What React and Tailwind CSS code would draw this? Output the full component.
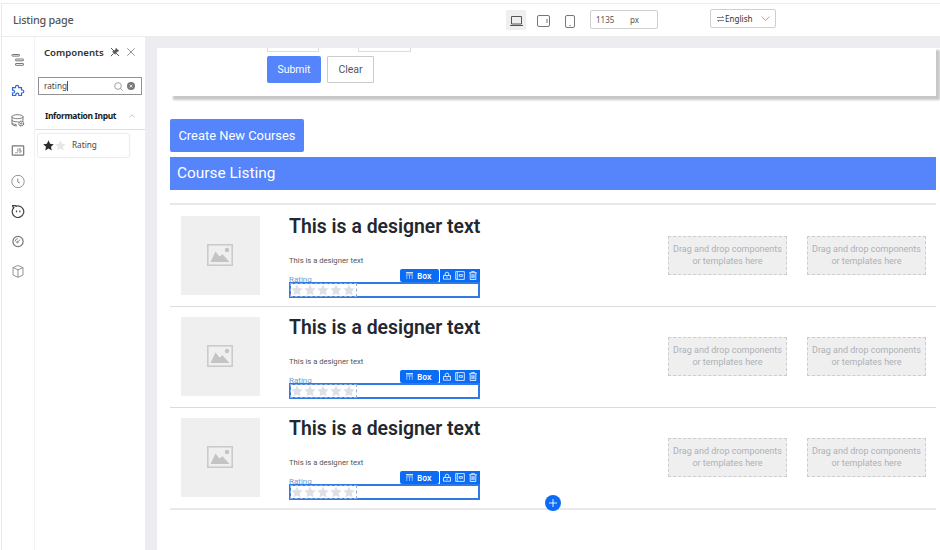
import React from "react";

const STAR = "M12 .8l3.400 7.400 8 1-5.900 5.500 1.500 8L12 18.800l-7 3.900 1.500-8L.6 9.200l8-1z";

function Star({ className }) {
  return (
    <svg viewBox="0 0 24 24" className={className} fill="currentColor">
      <path d={STAR} />
    </svg>
  );
}

function RailIcon({ children, className = "text-[#777]" }) {
  return (
    <div className="flex h-[30.2px] w-full shrink-0 items-center justify-center">
      <svg width="14" height="14" viewBox="0 0 14 14" fill="none" stroke="currentColor" strokeWidth="1" className={className}>
        {children}
      </svg>
    </div>
  );
}

function Rail() {
  return (
    <nav className="flex w-[33px] shrink-0 flex-col border-r border-[#f3f3f5] pt-[8px]">
      <RailIcon>
        <rect x="1" y="1.500" width="7.500" height="1.600" rx=".4" />
        <rect x="4.500" y="6" width="8" height="1.800" rx=".4" />
        <rect x="4.500" y="10.500" width="8" height="1.800" rx=".4" />
      </RailIcon>
      <RailIcon className="text-[#2b69d9]">
        <path strokeWidth="1.200" d="M1.500 4.700h3V3.900a1.600 1.600 0 1 1 3.200 0v.8h2.800v2.300h.8a1.500 1.500 0 1 1 0 3h-.8v2.500H7.800v-.8a1.500 1.500 0 1 0-3 0v.8H1.500V10h.7a1.400 1.400 0 1 0 0-2.800h-.7z" />
      </RailIcon>
      <RailIcon>
        <ellipse cx="6.500" cy="3.700" rx="5.500" ry="2" />
        <path d="M1 3.700V11c0 1 2.200 1.900 5 2M12 3.700v4M1 7c0 1.200 3.500 2.100 6.500 1.700M1 10c0 .8 2 1.500 4.500 1.500" />
        <circle cx="10.200" cy="10.500" r="2.400" strokeWidth="1.200" strokeDasharray="1.400 .4" />
        <circle cx="10.200" cy="10.500" r=".7" />
      </RailIcon>
      <RailIcon>
        <rect x="1.300" y="1.800" width="11.400" height="9.400" rx=".5" strokeWidth="1.200" />
        <path strokeWidth=".8" d="M6.800 4.500v3.300c0 .9-.8 1-2.600 1M10 4.800H8.300v1.500H10v1.800H8" />
      </RailIcon>
      <RailIcon className="text-[#888]">
        <circle cx="7" cy="7.500" r="6.200" strokeWidth=".9" />
        <path d="M6.800 4.500V8l2 1" />
      </RailIcon>
      <RailIcon className="text-[#444]">
        <path strokeWidth="1.200" d="M1 1.700h4.200M1.200 1.700l1.300 1.900M3.300 3.200A5.800 5.800 0 1 0 7 1.900c-.9 0-1.800.2-2.600.6" />
        <path strokeWidth="1.200" d="M5.500 6.500v1.700M8.800 6.500v1.700" />
      </RailIcon>
      <RailIcon>
        <circle cx="7" cy="7.500" r="5.100" strokeWidth="1.200" />
        <path strokeWidth=".8" d="M6.400 8.200l2.800-2.600M4.200 7.500A2.900 2.900 0 0 1 7 4.600" />
        <circle cx="6.400" cy="8.200" r=".8" strokeWidth=".8" />
      </RailIcon>
      <RailIcon className="text-[#888]">
        <path strokeWidth=".9" d="M7 1.500l5 2.100v7.400l-5 2.300-5-2.300V3.600zM2 3.600l5 2.200 5-2.200M7 5.800v7.500" />
      </RailIcon>
    </nav>
  );
}

function ComponentsPanel() {
  return (
    <aside className="flex w-[110px] shrink-0 flex-col">
      <div className="flex h-[33px] items-center pl-[9px]">
        <h2 className="w-[66px] whitespace-nowrap font-['Noto_Sans',sans-serif] text-[9.600px] font-semibold text-[#333]">Components</h2>
        <svg width="10" height="10" viewBox="0 0 10 10" className="-mt-[4px] text-[#555]" fill="none" stroke="currentColor">
          <path d="M1 1l8 8M.8 9.200l2.700-2.700" />
          <path d="M6 1l3 3-1.600.4-1.800 1.800-.4 1.400-3-3 1.500-.4 1.900-1.800z" fill="currentColor" strokeWidth=".3" />
        </svg>
        <svg width="8" height="8" viewBox="0 0 8 8" className="-mt-[4px] ml-[7px] text-[#777]" fill="none" stroke="currentColor" strokeWidth=".8">
          <path d="M.3.3l7.400 7.400M7.700.3L.3 7.700" />
        </svg>
      </div>
      <div className="ml-[3px] mt-[7px] flex h-[18px] w-[104px] items-center border border-[#929292] pl-[5px]">
        <span className="font-['Noto_Sans',sans-serif] text-[8.200px] text-[#444]">rating</span>
        <span className="h-[10px] w-px bg-[#555]" />
        <svg width="9" height="9" viewBox="0 0 9 9" className="ml-auto text-[#888]" fill="none" stroke="currentColor" strokeWidth=".8">
          <circle cx="4" cy="4" r="3.300" />
          <path d="M6.400 6.400l2.200 2.200" />
        </svg>
        <svg width="8" height="8" viewBox="0 0 8 8" className="ml-[4px] mr-[6px]">
          <circle cx="4" cy="4" r="4" fill="#777" />
          <path d="M2.500 2.500l3 3m0-3l-3 3" stroke="#fff" strokeWidth=".8" />
        </svg>
      </div>
      <div className="mt-[7px] flex h-[28px] items-center justify-between border-b border-[#dedee0] pl-[10px] pr-[10px]">
        <h3 className="whitespace-nowrap pt-[2px] font-['Noto_Sans',sans-serif] text-[8.500px] font-bold tracking-[-0.360px] text-[#1a1a1a]">Information Input</h3>
        <svg width="6" height="4" viewBox="0 0 6 4" fill="none" stroke="#aaa" strokeWidth=".7">
          <path d="M.4 3.400L3 .8l2.600 2.600" />
        </svg>
      </div>
      <div className="ml-[2px] mt-[3px] flex h-[25px] w-[93px] items-center rounded-[3px] border border-[#ececee] pl-[5px] shadow-[0_0_1px_#eee]">
        <Star className="size-[11px] text-[#2c2c2e]" />
        <Star className="ml-[1px] size-[11px] text-[#e6e6e9]" />
        <span className="ml-[6px] font-['Noto_Sans',sans-serif] text-[8.200px] text-[#444]">Rating</span>
      </div>
    </aside>
  );
}

function Header() {
  return (
    <header className="flex h-[34px] shrink-0 items-center border-b border-t border-[#ececee] pl-[11px] text-[#555]">
      <h1 className="w-[493px] font-['Noto_Sans',sans-serif] text-[10.800px] font-medium tracking-[-0.220px] text-[#555]">Listing page</h1>
      <div className="flex h-[20px] w-[20px] items-center justify-center bg-[#efeff0]">
        <svg width="13" height="12" viewBox="0 0 13 12" className="mt-[2px]" fill="none" stroke="#555">
          <path d="M1.500 1.500h10v7.500h-10z" />
          <path d="M0 10.500h13" />
        </svg>
      </div>
      <svg width="13" height="12" viewBox="0 0 13 12" className="ml-[11px] mt-[2px]" fill="none" stroke="#666" strokeWidth=".9">
        <rect x=".5" y=".5" width="12" height="11" rx="1.500" />
        <path d="M10 4v4" />
      </svg>
      <svg width="10" height="13" viewBox="0 0 10 13" className="ml-[15px] mt-[2px]" fill="none" stroke="#666" strokeWidth=".9">
        <rect x=".5" y=".5" width="9" height="12" rx="1.500" />
        <path d="M4.300 10.500h1.400" />
      </svg>
      <div className="-mt-[1px] ml-[15px] flex h-[19px] w-[68px] items-center rounded-[2px] border border-[#cfcfd1] pl-[5px] font-['Noto_Sans',sans-serif] text-[8px] text-[#555]">
        <span className="w-[34px]">1135</span>
        <span>px</span>
      </div>
      <div className="-mt-[3px] ml-[52px] flex h-[19px] w-[66px] items-center rounded-[2px] border border-[#cfcfd1] pl-[6px] font-['Noto_Sans',sans-serif] text-[8.100px] text-[#333]">
        <svg width="7" height="6" viewBox="0 0 7 6" fill="none" stroke="#666" strokeWidth=".8">
          <path d="M0 1.500h6.500L5 .2M7 4.500H.5L2 5.800" />
        </svg>
        <span className="ml-px pt-px">English</span>
        <svg width="9" height="5" viewBox="0 0 9 5" className="ml-auto mr-[5px]" fill="none" stroke="#999" strokeWidth=".8">
          <path d="M.5.5l4 4 4-4" />
        </svg>
      </div>
    </header>
  );
}

function BoxToolbar() {
  return (
    <div className="absolute -top-[15px] right-[-2px] flex h-[13px] gap-px text-white">
      <div className="flex w-[39px] items-center rounded-[2px] bg-[#0a6cf5] pl-[6px]">
        <svg width="7" height="7" viewBox="0 0 7 7" fill="none" stroke="currentColor" strokeWidth=".7">
          <path d="M0 .8h7" strokeWidth="1.200" />
          <path d="M0 2.800h7M.8 3v4M3.500 3v4M6.200 3v4" opacity=".75" />
        </svg>
        <span className="ml-[4px] font-['Noto_Sans',sans-serif] text-[8px] font-semibold leading-none">Box</span>
      </div>
      <div className="flex w-[40px] items-center gap-[4px] bg-[#0a6cf5] pl-[3px]">
        <svg width="8" height="9" viewBox="0 0 8 9" fill="none" stroke="currentColor" strokeWidth=".8">
          <path d="M.5 4.500h7v3.700h-7zM2.200 4.500V3a1.800 1.800 0 0 1 3.600 0v1.500M4 5.500v1.600" />
        </svg>
        <svg width="10" height="9" viewBox="0 0 10 9" fill="none" stroke="currentColor" strokeWidth=".8">
          <path d="M2.300.600h7v7.800h-7z" />
          <path d="M.7.600v7.800h1.600M.7.600h1.600M4.200 3.600h3.200v1.700H4.200z" />
        </svg>
        <svg width="8" height="9" viewBox="0 0 8 9" fill="none" stroke="currentColor" strokeWidth=".8">
          <path d="M.2 1.700h7.600M2.700 1.500V.4h2.600v1.100M1.200 1.700v6.800h5.600V1.700M2.900 3.200v4M4 3.200v4M5.100 3.200v4" />
        </svg>
      </div>
    </div>
  );
}

function DropZone() {
  return (
    <div className="flex h-[39px] w-[119px] items-center justify-center border border-dashed border-[#cbcdd0] bg-[#efeff0] pb-[2px] text-center font-[Roboto,sans-serif] text-[9px] leading-[12px] text-[#adb1b6]">
      <p className="whitespace-nowrap">
        Drag and drop components
        <br />
        or templates here
      </p>
    </div>
  );
}

function CourseRow({ last }) {
  return (
    <div className={last ? "flex h-[102px] border-b-2 border-[#e8e8ec]" : "flex h-[101px] border-b border-[#dcdcde]"}>
      <div className="ml-[11px] mt-[10px] flex size-[79px] shrink-0 items-center justify-center bg-[#efefef]">
        <svg width="26" height="22" viewBox="0 0 26 22" className="-ml-px -mt-px">
          <rect x=".8" y=".8" width="24.400" height="20.400" fill="none" stroke="#c8c8c8" strokeWidth="1.500" />
          <path d="M3.500 18L8.500 7.500l4 5 3-2.200L22.500 18z" fill="#c4c4c4" />
          <circle cx="20" cy="6" r="2.200" fill="#c4c4c4" />
        </svg>
      </div>
      <div className="ml-[29px] w-[191px] shrink-0">
        <h2 className="mt-[9px] whitespace-nowrap font-[Roboto,sans-serif] text-[19.400px] font-semibold leading-[24px] text-[#23272f]">This is a designer text</h2>
        <p className="mt-[17px] font-[Roboto,sans-serif] text-[7.650px] leading-[10px] text-[#555]">This is a designer text</p>
        <p className="mt-[9px] h-[7px] font-[Roboto,sans-serif] text-[8px] leading-[9px] text-[#6f9ad0]">Rating</p>
        <div className="relative flex h-[16px] w-[191px] border-2 border-[#2f7ae5]">
          <div className="-ml-px -mt-px flex h-[14px] w-[67px] shrink-0 items-center gap-[1px] border border-dashed border-[#8eaddc]">
            <Star className="size-[12px] shrink-0 text-[#dde0e6]" />
            <Star className="size-[12px] shrink-0 text-[#dde0e6]" />
            <Star className="size-[12px] shrink-0 text-[#dde0e6]" />
            <Star className="size-[12px] shrink-0 text-[#dde0e6]" />
            <Star className="size-[12px] shrink-0 text-[#dde0e6]" />
          </div>
          <BoxToolbar />
        </div>
      </div>
      <div className="ml-auto mr-[10px] mt-[30px] flex gap-[20px]">
        <DropZone />
        <DropZone />
      </div>
    </div>
  );
}

function Canvas() {
  return (
    <main className="mt-[11px] min-w-0 flex-1 overflow-hidden bg-white pl-[13px] pr-[4px]">
      <section className="ml-[1px] flex h-[48px] gap-[6px] pl-[96px] shadow-[3px_3px_2px_1px_#c8c8c8]">
        <div className="w-[54px] shrink-0">
          <div className="h-[4px] w-[52px] border border-t-0 border-[#dcdcdc]" />
          <button className="mt-[4px] block h-[27px] w-[54px] rounded-[2px] bg-[#5584fb] font-[Roboto,sans-serif] text-[10.500px] text-white">Submit</button>
        </div>
        <div className="w-[84px]">
          <div className="ml-[31px] h-[4px] w-[53px] border border-t-0 border-[#dcdcdc]" />
          <button className="mt-[4px] block h-[27px] w-[47px] rounded-[1px] border border-[#cbcbcb] font-[Roboto,sans-serif] text-[10.500px] text-[#555]">Clear</button>
        </div>
      </section>
      <button className="mt-[23px] block h-[33px] w-[134px] rounded-[2px] bg-[#5584fb] font-[Roboto,sans-serif] text-[12.900px] text-white">Create New Courses</button>
      <h2 className="mt-[5px] flex h-[33px] items-center bg-[#5584fb] pl-[7px] pt-px font-[Roboto,sans-serif] text-[15.400px] text-white">Course Listing</h2>
      <section className="relative mt-[13px] border-t-2 border-[#e8e8ec] pt-px">
        <CourseRow />
        <CourseRow />
        <CourseRow last />
        <button className="absolute bottom-[-1px] left-[375px] flex size-[16px] items-center justify-center rounded-full bg-[#0a6cf5]">
          <svg width="8" height="8" viewBox="0 0 8 8" stroke="#fff" strokeWidth=".9">
            <path d="M4 0v8M0 4h8" />
          </svg>
        </button>
      </section>
    </main>
  );
}

export default function App() {
  return (
    <div className="flex h-[550px] w-[940px] overflow-hidden bg-white pl-px pt-[3px]">
      <div className="flex min-w-0 flex-1 flex-col border-l border-[#e9e9eb]">
        <Header />
        <div className="flex min-h-0 flex-1">
          <Rail />
          <ComponentsPanel />
          <div className="flex min-w-0 flex-1 bg-[#ededf1] pl-[12px]">
            <Canvas />
          </div>
        </div>
      </div>
    </div>
  );
}
